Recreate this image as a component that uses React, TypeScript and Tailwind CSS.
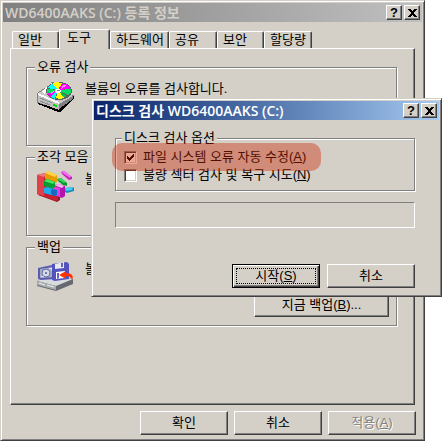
import React from "react";
import clsx from "clsx";

const raised =
  "border border-t-white border-l-white border-r-[#404040] border-b-[#404040] bg-[#d4d0c8] shadow-[inset_-1px_-1px_0_#808080]";

const frame =
  "border border-t-[#d4d0c8] border-l-[#d4d0c8] border-r-[#404040] border-b-[#404040] bg-[#d4d0c8] p-[2px] shadow-[inset_1px_1px_0_#fff,inset_-1px_-1px_0_#808080]";

interface TitleBarProps {
  title: string;
  active?: boolean;
}

const TitleBar: React.FC<TitleBarProps> = ({ title, active }) => (
  <header
    className={clsx(
      "flex h-[19px] items-center gap-[2px] bg-linear-to-r pr-[2px] pl-[2px]",
      active ? "from-[#0a246a] to-[#a6caf0] text-white" : "from-[#808080] to-[#c0c0c0] text-[#d4d0c8]"
    )}
  >
    <h1 className="flex-1 truncate font-['Open_Sans','Noto_Sans_CJK_KR',sans-serif] text-[14px] leading-[19px] font-semibold">
      {title}
    </h1>
    <button
      className={clsx(raised, "flex h-[15px] w-4 items-center justify-center text-[13px] leading-[13px] font-bold text-black")}
    >
      ?
    </button>
    <button aria-label="닫기" className={clsx(raised, "flex h-[15px] w-4 items-center justify-center")}>
      <svg width="9" height="8" viewBox="0 0 9 8" shapeRendering="crispEdges">
        <path
          d="M0 0h3v1h1v1h1V1h1V0h3v1H8v1H7v1H6v2h1v1h1v1h1v1H6V7H5V6H4v1H3v1H0V7h1V6h1V5h1V3H2V2H1V1H0z"
          fill="#000"
        />
      </svg>
    </button>
  </header>
);

interface PushButtonProps {
  label: string;
  hotkey?: string;
  suffix?: string;
  className?: string;
  disabled?: boolean;
  focused?: boolean;
}

const PushButton: React.FC<PushButtonProps> = ({ label, hotkey, suffix, className = "w-[88px]", disabled, focused }) => (
  <button
    disabled={disabled}
    className={clsx(
      "h-6",
      className,
      focused
        ? "border border-black bg-[#d4d0c8] p-[3px] shadow-[inset_1px_1px_0_#fff,inset_-1px_-1px_0_#404040,inset_-2px_-2px_0_#808080]"
        : raised,
      disabled && "text-[#808080] [text-shadow:1px_1px_0_#fff]"
    )}
  >
    <span
      className={clsx(
        "flex items-center justify-center",
        focused ? "h-4 border border-dotted border-black leading-[14px]" : "leading-5"
      )}
    >
      {label}
      {hotkey && (
        <>
          (<u>{hotkey}</u>)
        </>
      )}
      {suffix}
    </span>
  </button>
);

interface GroupProps {
  title: string;
  className?: string;
  children: React.ReactNode;
}

const Group: React.FC<GroupProps> = ({ title, className, children }) => (
  <fieldset
    className={clsx(
      "min-w-0 border border-[#808080] shadow-[inset_1px_1px_0_#fff,1px_1px_0_#fff]",
      className
    )}
  >
    <legend className="bg-[#d4d0c8] px-[2px] leading-4">{title}</legend>
    {children}
  </fieldset>
);

interface CheckRowProps {
  id: string;
  label: string;
  hotkey: string;
  checked?: boolean;
}

const CheckRow: React.FC<CheckRowProps> = ({ id, label, hotkey, checked }) => (
  <div className="flex h-[18px] items-center gap-[6px]">
    <span className="relative flex">
      <input
        id={id}
        type="checkbox"
        defaultChecked={checked}
        className="peer size-[13px] appearance-none border border-t-[#808080] border-l-[#808080] border-r-white border-b-white bg-white shadow-[inset_1px_1px_0_#404040,inset_-1px_-1px_0_#d4d0c8]"
      />
      <svg
        className="pointer-events-none absolute inset-0 hidden peer-checked:block"
        width="13"
        height="13"
        shapeRendering="crispEdges"
      >
        <path d="M3 5h1v1h1v1h1V6h1V5h1V4h1V3h1v3H9v1H8v1H7v1H6v1H5V9H4V8H3z" fill="#000" />
      </svg>
    </span>
    <label htmlFor={id}>
      {label}(<u>{hotkey}</u>)
    </label>
  </div>
);

const DiscDriveIcon = () => (
  <svg width="37" height="32" viewBox="0 0 37 32" className="shrink-0" shapeRendering="crispEdges">
    <path d="M0 12 14 3V1h3v10l20 3v3L23 30h-2L0 22z" fill="#808080" />
    <path d="M1 22v1l20 8h2l14-13v-3L22 28z" fill="#000" />
    <path d="M1 12l14-8 21 11-14 9z" fill="#c8c8c8" />
    <path d="M1 13l21 9v7L1 21z" fill="#c0c0c0" />
    <path d="M1 12l21 9v2L1 14z" fill="#fff" />
    <path d="M22 23l14-8v3L22 28z" fill="#808080" />
    <path d="M5 10l10-8v5l-8 6z" fill="#fff" />
    <path d="M3 17l12 5M3 20l10 4" stroke="#909090" />
    <path d="M16 23l4 1v2l-4-1z" fill="#00e000" />
    {/* disc surface */}
    <ellipse cx="22" cy="10" rx="13" ry="9" fill="#606060" />
    <path d="M21 9 15 3l4-2 6 1z" fill="#ffff00" />
    <path d="M21 9l5-7 5 2 2 4z" fill="#ff00ff" />
    <path d="M21 9l13-1v4l-3 2z" fill="#00e060" />
    <path d="M21 9l9 6-4 2z" fill="#00c050" />
    <path d="M21 9l6 8-5 1-3-1z" fill="#ffff00" />
    <path d="M21 9l-3 9-5-3z" fill="#00ffff" />
    <path d="M21 9l-8 7-3-3z" fill="#ff00ff" />
    <path d="M21 9l-11 4V8z" fill="#00e060" />
    <path d="M21 9 10 7l5-4z" fill="#00ffff" />
    <path d="M26 4h2l1 1-5 3zM13 12l4-2v1l-3 2z" fill="#fff" opacity=".6" />
    <ellipse cx="21" cy="10" rx="3" ry="2" fill="#fff" />
    <path d="M20 9h3v1h-3z" fill="#808080" />
  </svg>
);

const DefragIcon = () => (
  <svg width="37" height="32" viewBox="0 0 37 32" className="shrink-0">
    <path d="M1 24l19 7 3-2v-4L9 20z" fill="#8f1722" />
    <path d="M0 4l8-2 3 2v18l10 4v3l-2 1L0 23z" fill="#c91f32" />
    <path d="M0 4l7 2v19l-7-2z" fill="#e0404a" />
    <path d="M0 4l8-2 3 2-4 2z" fill="#f07a78" />
    <path d="M8 2l3-2 9 4v7l-2 1-10-4z" fill="#e69b00" />
    <path d="M8 2l3-2 9 4-2 2z" fill="#ffd84a" />
    <path d="M17 14l5-1 6 2v10l-3 2-8-3z" fill="#b312ae" />
    <path d="M17 14l5-1 5 2-2 2z" fill="#ffb6f4" />
    <path d="M17 15l6 2v9l-6-2z" fill="#e33ddd" />
    <path d="M7 10l3-2 8 3v5l-2 2-9-3z" fill="#079c32" />
    <path d="M7 10l3-2 8 3-2 2z" fill="#42e85c" />
    <path d="M7 17l3-1 10 3v5l-2 1-11-3z" fill="#0877d1" />
    <path d="M7 17l3-1 5 2v6l-8-2z" fill="#25a7ee" />
    <path d="M14 19l5 1v4l-5-1z" fill="#2264bd" />
    <path d="M20 8l4-1 6 5v3l-4-1-5-4z" fill="#079536" />
    <path d="M20 8l4-1 5 4-2 1z" fill="#38d65b" />
    <path d="M24 1l3-1 8 6v2l-3 1-7-6z" fill="#c21bc2" />
    <path d="M24 1l3-1 7 5-1 2z" fill="#f86cf0" />
    <path d="M28 17l8-1 1 1v3l-7 2-2-1z" fill="#178cb8" />
    <path d="M28 17l8-1-1 3-6 1z" fill="#45cdf0" />
  </svg>
);

const BackupIcon = () => (
  <svg width="37" height="32" viewBox="0 0 37 32" className="shrink-0">
    <path d="M0 20l13-6 23 4v5L19 30 0 25z" fill="#666a6e" />
    <path d="M0 20l13-6 23 4-17 7z" fill="#d9dcdf" />
    <path d="M0 20l19 5v4L0 24z" fill="#a7abaf" />
    <path d="M2 22l6 2M10 24l7 2" stroke="#f2f2f2" />
    <path d="M1 7l14-3 4 1v13L4 19l-3-1z" fill="#5b5bb0" />
    <path d="M3 8l13-2v10L3 17z" fill="#a4abc5" />
    <circle cx="9" cy="12" r="4" fill="#d5d8e5" stroke="#6870a0" />
    <circle cx="9" cy="12" r="1" fill="#555c90" />
    <path d="M12 8l3-1v3M4 15l3 1" stroke="#e8e8ff" fill="none" />
    <path d="M15 3l15-2 2 2v15l-14 2-3-1z" fill="#5353bd" />
    <path d="M18 3l9-2v6l-9 1z" fill="#e8e8ef" />
    <path d="M25 2v4" stroke="#6262bd" strokeWidth="2" />
    <path d="M19 11l9-1v7l-9 1z" fill="#fff" />
    <path d="M20 12h2v5l-2 1z" fill="#6363bd" />
    <path d="M22 14l7-4v2c6 0 8 3 6 7-1-3-3-4-6-4v3z" fill="#ff3300" />
  </svg>
);

const tabs = [
  { label: "일반", width: "w-[47px]" },
  { label: "도구", width: "w-[51px]", selected: true },
  { label: "하드웨어", width: "w-[59px]" },
  { label: "공유", width: "w-12" },
  { label: "보안", width: "w-[47px]" },
  { label: "할당량", width: "w-12" },
];

const PropertiesWindow = () => (
  <main className={clsx(frame, "mr-[17px]")}>
    <TitleBar title="WD6400AAKS (C:) 등록 정보" />
    <div className="px-[7px] pt-[7px] pb-[3px]">
      <div role="tablist" className="flex items-end pl-[2px]">
        {tabs.map((tab) => (
          <button
            key={tab.label}
            role="tab"
            aria-selected={!!tab.selected}
            className={clsx(
              tab.width,
              "rounded-t-[2px] border-t border-r border-l border-t-white border-r-[#404040] border-l-white bg-[#d4d0c8] text-left whitespace-nowrap shadow-[inset_-1px_0_0_#808080]",
              tab.selected ? "z-10 -mb-px h-5 pb-[3px] pl-[7px] leading-4" : "h-[17px] pl-[5px] leading-4"
            )}
          >
            {tab.label}
          </button>
        ))}
      </div>

      <div role="tabpanel" className={clsx(raised, "flex flex-col gap-[3px] pt-[10px] pr-[17px] pb-[78px] pl-[15px]")}>
        <Group title="오류 검사" className="h-[87px] px-2">
          <div className="flex gap-[11px] pt-[6px] pl-[2px]">
            <DiscDriveIcon />
            <p className="leading-4">볼륨의 오류를 검사합니다.</p>
          </div>
        </Group>
        <Group title="조각 모음" className="h-[87px] px-2">
          <div className="flex gap-[11px] pt-[6px] pl-[2px]">
            <DefragIcon />
            <p className="leading-4">볼</p>
          </div>
        </Group>
        <Group title="백업" className="h-[87px] px-2">
          <div className="flex gap-[11px] pt-[6px] pl-[2px]">
            <BackupIcon />
            <p className="leading-4">볼</p>
          </div>
          <div className="-mr-px flex justify-end">
            <PushButton label="지금 백업" hotkey="B" suffix="..." className="w-[135px]" />
          </div>
        </Group>
      </div>

      <div className="-mr-px flex justify-end gap-[6px] pt-[6px]">
        <PushButton label="확인" />
        <PushButton label="취소" />
        <PushButton label="적용" hotkey="A" disabled />
      </div>
    </div>
  </main>
);

const CheckDiskDialog = () => (
  <div role="dialog" aria-label="디스크 검사" className={clsx(frame, "absolute top-[98px] right-0 left-[91px] z-20")}>
    <TitleBar title="디스크 검사 WD6400AAKS (C:)" active />
    <div className="pt-[10px] pr-6 pb-[6px] pl-[21px]">
      <Group title="디스크 검사 옵션" className="px-[6px] pb-[6px]">
        <div className="relative pt-[2px] pl-[2px]">
          <CheckRow id="auto-fix" label="파일 시스템 오류 자동 수정" hotkey="A" checked />
          <CheckRow id="scan-sectors" label="불량 섹터 검사 및 복구 시도" hotkey="N" />
          {/* marker over the first option */}
          <div className="pointer-events-none absolute -top-[3px] -left-[10px] h-7 w-[209px] rounded-[10px] bg-[#ca2500]/40" />
        </div>
      </Group>
      <div
        role="progressbar"
        aria-label="진행률"
        className="mt-[11px] h-[26px] border border-t-[#808080] border-l-[#808080] border-r-white border-b-white"
      />
      <div className="flex justify-end gap-[7px] pt-9">
        <PushButton label="시작" hotkey="S" focused />
        <PushButton label="취소" />
      </div>
    </div>
  </div>
);

const App: React.FC = () => (
  <div className="relative bg-white font-['Liberation_Sans','Noto_Sans_CJK_KR',sans-serif] text-[13px] leading-4 text-black">
    <PropertiesWindow />
    <CheckDiskDialog />
  </div>
);

export default App;
